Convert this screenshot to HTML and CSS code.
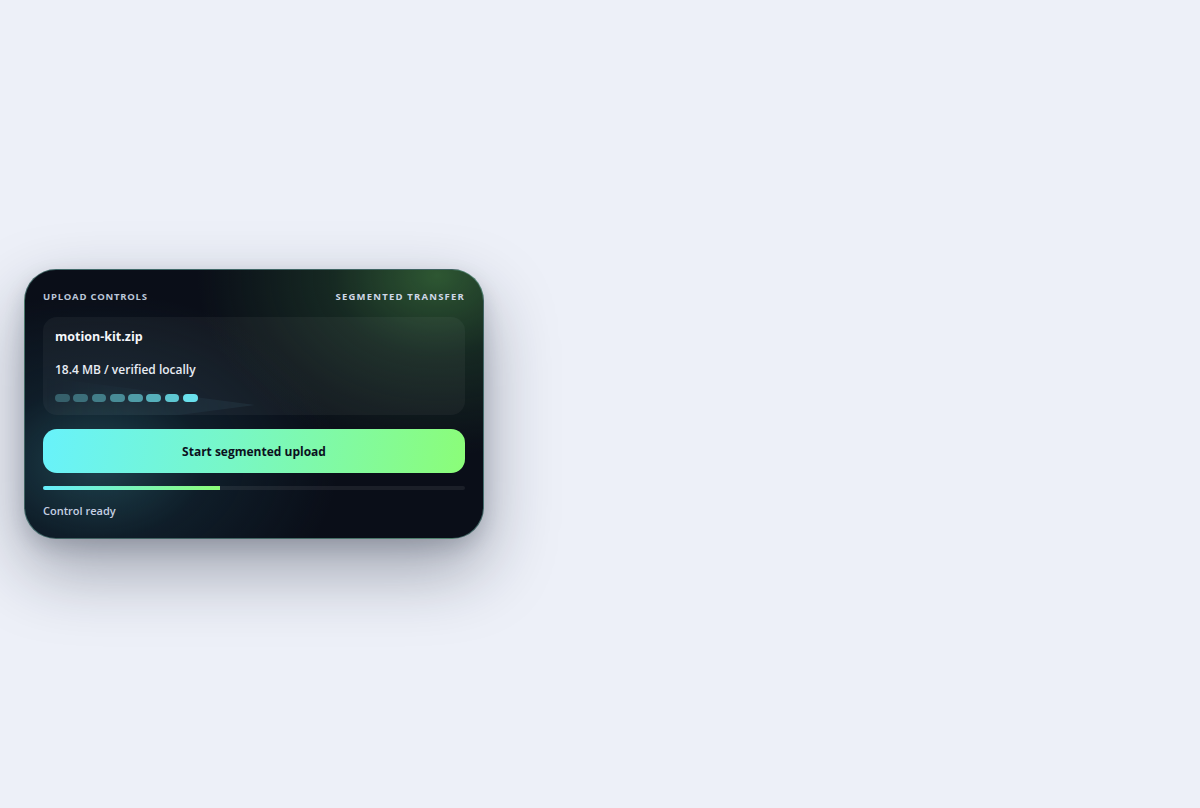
FILE: index.html
```html
<!DOCTYPE html>
<html lang="en">
<head>
<meta charset="utf-8">
<title>Upload controls</title>
<link rel="stylesheet" href="styles.css">
</head>
<body>
<main class="stage">
  <section class="card">
    <header class="card-head">
      <span class="eyebrow eyebrow-left">Upload controls</span>
      <span class="eyebrow eyebrow-right">Segmented transfer</span>
    </header>
    <div class="file-panel">
      <div class="file-name">motion-kit.zip</div>
      <div class="file-meta">18.4 MB / verified locally</div>
      <div class="segments">
        <span class="seg s1"></span>
        <span class="seg s2"></span>
        <span class="seg s3"></span>
        <span class="seg s4"></span>
        <span class="seg s5"></span>
        <span class="seg s6"></span>
        <span class="seg s7"></span>
        <span class="seg s8"></span>
      </div>
    </div>
    <button class="start-btn" type="button">Start segmented upload</button>
    <div class="progress"><div class="progress-fill" style="width:42%"></div></div>
    <div class="status">Control ready</div>
  </section>
</main>
</body>
</html>
```

FILE: styles.css
```css
* { box-sizing: border-box; }
html, body { margin: 0; padding: 0; }
body {
  background: #edf0f8;
  font-family: "Open Sans", "Noto Sans", sans-serif;
}
.stage {
  min-height: 100vh;
  display: flex;
  align-items: center;
  padding: 0 24px;
}
.card {
  width: 460px;
  height: 270px;
  border-radius: 32px;
  border: 1px solid rgba(110, 170, 160, 0.55);
  padding: 18px 18px 0 18px;
  display: flex;
  flex-direction: column;
  background:
    radial-gradient(ellipse 240px 180px at 90% 2%, rgba(52, 100, 55, 0.85) 0, rgba(36, 72, 46, 0.45) 45%, rgba(10, 15, 26, 0) 100%),
    radial-gradient(ellipse 240px 170px at 16% 72%, rgba(38, 88, 100, 0.7) 0, rgba(24, 58, 72, 0.35) 45%, rgba(10, 15, 26, 0) 100%),
    #0a0e18;
  box-shadow: 0 30px 70px rgba(20, 28, 48, 0.38), 0 8px 20px rgba(20, 28, 48, 0.15);
}
.card-head {
  display: flex;
  justify-content: space-between;
  align-items: center;
  height: 16px;
}
.eyebrow {
  font-size: 9.5px;
  font-weight: 700;
  text-transform: uppercase;
}
.eyebrow-left { letter-spacing: 0.75px; color: #bcc6d8; }
.eyebrow-right { letter-spacing: 1.2px; color: #cfd8e8; }
.file-panel {
  margin-top: 13px;
  height: 98px;
  border-radius: 14px;
  background: rgba(255, 255, 255, 0.045);
  padding: 10px 12px 0 12px;
  position: relative;
  overflow: hidden;
}
.file-panel::after {
  content: "";
  position: absolute;
  left: 0;
  top: 60px;
  width: 212px;
  height: 56px;
  background: linear-gradient(90deg, rgba(80, 140, 160, 0.0) 0%, rgba(80, 140, 160, 0.07) 60%, rgba(100, 160, 180, 0.1) 100%);
  clip-path: polygon(0 0, 100% 50%, 0 100%);
  filter: blur(2px);
  pointer-events: none;
}
.file-name {
  font-size: 12.5px;
  font-weight: 700;
  color: #f5f7fb;
  line-height: 20px;
}
.file-meta {
  margin-top: 13px;
  font-size: 12px;
  font-weight: 600;
  color: #e8ecf4;
  line-height: 20px;
}
.segments {
  margin-top: 14px;
  display: flex;
  gap: 3.6px;
  position: relative;
  z-index: 1;
}
.seg {
  width: 14.7px;
  height: 8px;
  border-radius: 4px;
}
.s1 { background: #36606b; }
.s2 { background: #3c6f7a; }
.s3 { background: #427d88; }
.s4 { background: #488c97; }
.s5 { background: #4f9ca7; }
.s6 { background: #56b0bb; }
.s7 { background: #5ec6d1; }
.s8 { background: #69e0ec; }
.start-btn {
  margin-top: 14px;
  height: 44px;
  width: 100%;
  border: none;
  border-radius: 14px;
  background: linear-gradient(100deg, #68f2fb 0%, #78f7c6 45%, #8bfd78 100%);
  font-family: inherit;
  font-size: 12px;
  font-weight: 700;
  color: #0b1020;
  cursor: pointer;
}
.progress {
  margin-top: 13px;
  height: 4px;
  border-radius: 2px;
  background: rgba(255, 255, 255, 0.07);
  overflow: hidden;
}
.progress-fill {
  height: 100%;
  background: linear-gradient(90deg, #66eefc, #8bfd78);
}
.status {
  margin-top: 13px;
  font-size: 11px;
  font-weight: 600;
  color: #c6d0e2;
  line-height: 16px;
}
```
